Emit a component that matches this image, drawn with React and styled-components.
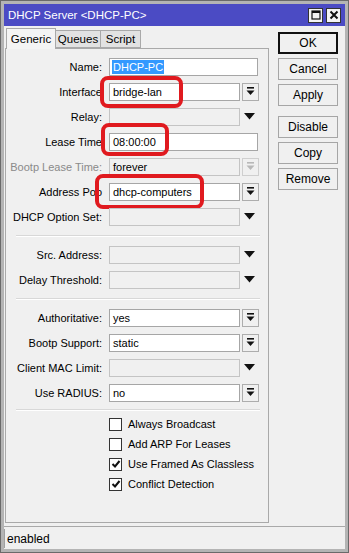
import styled, { createGlobalStyle } from 'styled-components';

const Global = createGlobalStyle`
  html, body { margin: 0; padding: 0; background: #ababab; }
  body { font-family: "Liberation Sans", Arial, sans-serif; font-size: 11px; color: #000; }
`;

// mark: red hand-drawn highlight around the field, offsets relative to the row
const rows = [
  { label: 'Name:', value: 'DHCP-PC', kind: 'plain', selected: true },
  { label: 'Interface', value: 'bridge-lan', kind: 'select', mark: { left: 94, top: -3, width: 83, height: 32 } },
  { label: 'Relay:', kind: 'drop', disabled: true },
  { label: 'Lease Time', value: '08:00:00', kind: 'plain', mark: { left: 95, top: -6, width: 68, height: 33 } },
  { label: 'Bootp Lease Time:', value: 'forever', kind: 'select', dim: true },
  { label: 'Address Poo', value: 'dhcp-computers', kind: 'select', mark: { left: 89, top: -5, width: 109, height: 35 } },
  { label: 'DHCP Option Set:', kind: 'drop', disabled: true },
  { sep: true },
  { label: 'Src. Address:', kind: 'drop', disabled: true },
  { label: 'Delay Threshold:', kind: 'drop', disabled: true },
  { sep: true },
  { label: 'Authoritative:', value: 'yes', kind: 'select' },
  { label: 'Bootp Support:', value: 'static', kind: 'select' },
  { label: 'Client MAC Limit:', kind: 'drop', disabled: true },
  { label: 'Use RADIUS:', value: 'no', kind: 'select' },
  { sep: true, tight: true },
];

const checks = [
  { label: 'Always Broadcast', on: false },
  { label: 'Add ARP For Leases', on: false },
  { label: 'Use Framed As Classless', on: true },
  { label: 'Conflict Detection', on: true },
];

const SelectArrow = ({ dim }) => (
  <svg width="9" height="9" viewBox="0 0 9 9">
    <rect x="1" y="0" width="7" height="1.6" fill={dim ? '#b8b8b8' : '#111'} />
    <path d="M0.5 3.5 H8.5 L4.5 8 Z" fill={dim ? '#b8b8b8' : '#111'} />
  </svg>
);

const Triangle = () => (
  <svg width="11" height="7" viewBox="0 0 11 7">
    <path d="M0 0 H11 L5.5 6.5 Z" fill="#111" />
  </svg>
);

const Check = () => (
  <svg width="10" height="10" viewBox="0 0 10 10">
    <path d="M1.5 5 L4 7.5 L8.5 2" stroke="#111" strokeWidth="2" fill="none" />
  </svg>
);

const App = () => {
  return (
    <>
      <Global />
      <Window>
        <TitleBar>
          <span>DHCP Server &lt;DHCP-PC&gt;</span>
          <TitleButtons>
            <TitleBtn>
              <svg width="10" height="10" viewBox="0 0 10 10">
                <rect x="1" y="1" width="8" height="8" fill="none" stroke="#111" strokeWidth="1.2" />
                <rect x="1" y="1" width="8" height="2" fill="#111" />
              </svg>
            </TitleBtn>
            <TitleBtn>
              <svg width="10" height="10" viewBox="0 0 10 10">
                <path d="M1.5 1.5 L8.5 8.5 M8.5 1.5 L1.5 8.5" stroke="#111" strokeWidth="2" />
              </svg>
            </TitleBtn>
          </TitleButtons>
        </TitleBar>
        <Body>
          <LeftSide>
            <Tabs>
              <Tab $active $w={50}>Generic</Tab>
              <Tab $w={46}>Queues</Tab>
              <Tab $w={41}>Script</Tab>
            </Tabs>
            <Panel>
              {rows.map((r, i) =>
                r.sep ? (
                  <Separator key={i} $tight={r.tight} />
                ) : (
                  <Row key={i}>
                    <Label $dim={r.dim}>{r.label}</Label>
                    <Field $wide={r.kind === 'plain'} $disabled={r.disabled || r.dim}>
                      {r.selected ? <Selected>{r.value}</Selected> : r.value}
                    </Field>
                    {r.kind === 'select' && (
                      <DropButton $dim={r.dim}>
                        <SelectArrow dim={r.dim} />
                      </DropButton>
                    )}
                    {r.kind === 'drop' && (
                      <DropSlot>
                        <Triangle />
                      </DropSlot>
                    )}
                    {r.mark && <Mark style={r.mark} />}
                  </Row>
                )
              )}
              <Checks>
                {checks.map((c) => (
                  <CheckRow key={c.label}>
                    <Box>{c.on && <Check />}</Box>
                    {c.label}
                  </CheckRow>
                ))}
              </Checks>
            </Panel>
          </LeftSide>
          <Buttons>
            <Button $default>OK</Button>
            <Button>Cancel</Button>
            <Button>Apply</Button>
            <Gap />
            <Button>Disable</Button>
            <Button>Copy</Button>
            <Button>Remove</Button>
          </Buttons>
        </Body>
        <StatusBar>
          <Status>enabled</Status>
        </StatusBar>
      </Window>
    </>
  );
};

const Window = styled.div`
  width: 349px;
  height: 553px;
  box-sizing: border-box;
  border: 1px solid #6a6a6a;
  background: #f0f0f0;
  box-shadow: inset 0 0 0 3px #b4b4b4;
  padding: 3px;
  display: flex;
  flex-direction: column;
`;

const TitleBar = styled.div`
  height: 22px;
  background: #4b4bc4;
  color: #fff;
  font-size: 11.5px;
  display: flex;
  align-items: center;
  justify-content: space-between;
  padding: 0 4px 0 4px;
  flex-shrink: 0;
`;

const TitleButtons = styled.div`
  display: flex;
  gap: 3px;
`;

const TitleBtn = styled.div`
  width: 13px;
  height: 13px;
  background: #f4f4f4;
  border: 1px solid #333;
  display: flex;
  align-items: center;
  justify-content: center;
`;

const Body = styled.div`
  flex: 1;
  display: flex;
  padding-top: 2px;
  min-height: 0;
`;

const LeftSide = styled.div`
  width: 264px;
  display: flex;
  flex-direction: column;
  padding-left: 1px;
`;

const Tabs = styled.div`
  display: flex;
  height: 20px;
  padding-left: 1px;
  align-items: flex-end;
`;

const Tab = styled.div`
  width: ${(p) => p.$w}px;
  height: ${(p) => (p.$active ? '21px' : '18px')};
  box-sizing: border-box;
  display: flex;
  align-items: center;
  justify-content: center;
  font-size: 11.5px;
  border: 1px solid #a9a9a9;
  border-bottom: ${(p) => (p.$active ? 'none' : '1px solid #a9a9a9')};
  margin-left: ${(p) => (p.$active ? '0' : '-1px')};
  margin-bottom: ${(p) => (p.$active ? '-1px' : '0')};
  position: relative;
  z-index: ${(p) => (p.$active ? 1 : 0)};
  background: ${(p) => (p.$active ? '#f4f4f4' : '#e2e2e2')};
`;

const Panel = styled.div`
  flex: 1;
  border: 1px solid #a9a9a9;
  padding-top: 5px;
`;

const Row = styled.div`
  position: relative;
  display: flex;
  align-items: center;
  height: 25px;
`;

const Label = styled.div`
  width: 96px;
  text-align: right;
  padding-right: 7px;
  white-space: nowrap;
  color: ${(p) => (p.$dim ? '#8a8a8a' : '#000')};
`;

const Field = styled.div`
  width: ${(p) => (p.$wide ? '149px' : '131px')};
  height: 18px;
  box-sizing: border-box;
  border: 1px solid ${(p) => (p.$disabled ? '#c4c4c4' : '#a6a6a6')};
  background: ${(p) => (p.$disabled ? '#f0f0f0' : '#fff')};
  padding-left: 3px;
  display: flex;
  align-items: center;
  white-space: nowrap;
  overflow: hidden;
`;

const Selected = styled.span`
  background: #3399ff;
  color: #fff;
  padding: 1px 1px;
  margin-left: -1px;
`;

const DropButton = styled.div`
  width: 17px;
  height: 18px;
  box-sizing: border-box;
  margin-left: 2px;
  border: 1px solid ${(p) => (p.$dim ? '#cfcfcf' : '#adadad')};
  background: #f0f0f0;
  display: flex;
  align-items: center;
  justify-content: center;
`;

const DropSlot = styled.div`
  width: 19px;
  height: 18px;
  display: flex;
  align-items: center;
  justify-content: center;
`;

const Separator = styled.div`
  margin: ${(p) => (p.$tight ? '4px 10px 4px' : '6px 10px 6px')};
  width: 244px;
  height: 1px;
  background: #d8d8d8;
  box-shadow: 0 1px 0 #fff;
`;

const Checks = styled.div`
  display: flex;
  flex-direction: column;
  padding: 0 0 0 103px;
`;

const CheckRow = styled.div`
  display: flex;
  align-items: center;
  gap: 6px;
  height: 20px;
`;

const Box = styled.div`
  width: 13px;
  height: 13px;
  box-sizing: border-box;
  border: 1px solid #333;
  background: #fff;
  display: flex;
  align-items: center;
  justify-content: center;
`;

const Mark = styled.div`
  position: absolute;
  box-sizing: border-box;
  border: 4px solid #e01a1f;
  border-radius: 8px;
  pointer-events: none;
`;

const Buttons = styled.div`
  display: flex;
  flex-direction: column;
  gap: 4px;
  padding: 4px 0 0 9px;
`;

const Button = styled.div`
  width: 60px;
  height: 22px;
  box-sizing: border-box;
  border: ${(p) => (p.$default ? '2px solid #111' : '1px solid #a6a6a6')};
  background: #f0f0f0;
  display: flex;
  align-items: center;
  justify-content: center;
  font-size: 12px;
`;

const Gap = styled.div`
  height: 2px;
`;

const StatusBar = styled.div`
  height: 23px;
  flex-shrink: 0;
  padding-top: 2px;
  border-top: 1px solid #a9a9a9;
  margin-top: 3px;
  box-sizing: border-box;
`;

const Status = styled.div`
  height: 19px;
  box-sizing: border-box;
  border-left: 1px solid #a0a0a0;
  padding-left: 2px;
  display: flex;
  align-items: center;
  font-size: 12px;
`;

export default App;
